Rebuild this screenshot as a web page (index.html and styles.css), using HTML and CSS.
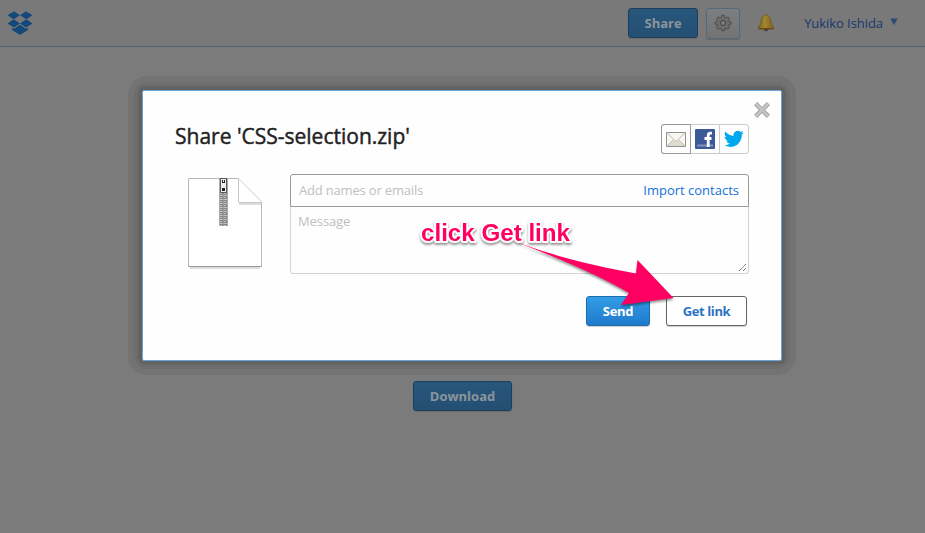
FILE: index.html
```html
<!DOCTYPE html>
<html lang="en">
<head>
<meta charset="utf-8">
<title>Dropbox - CSS-selection.zip</title>
<link rel="stylesheet" href="styles.css">
</head>
<body>
<header class="topbar">
  <svg class="logo" width="26" height="25" viewBox="0 0 26 25" fill="#15487a">
    <path d="M7 0.3L13 4.2L6.7 8.3L0.5 4.2ZM19 0.3L25.5 4.2L19.3 8.3L13 4.2ZM6.7 8.3L13 12.5L7 16.5L0.5 12.5ZM19.3 8.3L25.5 12.5L19 16.5L13 12.5ZM13 13.8L19 17.7L20.9 16.6V19L13 24L5.1 19V16.6L7 17.7Z"/>
  </svg>
  <nav class="actions">
    <button class="btn btn-dim share">Share</button>
    <button class="gear" aria-label="Settings">
      <svg width="18" height="18" viewBox="0 0 18 18">
        <path d="M7.7 1.3H10.3L10.8 3.4L12.2 4L14 2.9L15.6 4.5L14.6 6.2L15.1 7.5L17 8V10.2L15.1 10.7L14.5 12L15.5 13.7L13.8 15.3L12.1 14.3L10.8 14.9L10.3 16.8H7.8L7.3 14.9L5.9 14.3L4.2 15.4L2.6 13.7L3.6 12L3 10.7L1 10.2V8L3 7.5L3.6 6.1L2.6 4.4L4.2 2.8L5.9 3.9L7.3 3.3Z" fill="#6c6c6c" stroke="#484848" stroke-width=".9"/>
        <circle cx="9" cy="9" r="2.5" fill="#7c7c7c" stroke="#424242" stroke-width="1"/>
      </svg>
    </button>
    <svg class="bell" width="18" height="18" viewBox="0 0 18 18">
      <defs><linearGradient id="brass" x2="1"><stop stop-color="#806216"/><stop offset=".42" stop-color="#a08730"/><stop offset="1" stop-color="#80601b"/></linearGradient></defs>
      <path d="M6.5 15H11.5Q11.1 17.2 9 17.2T6.5 15Z" fill="#443b2e"/>
      <path d="M6.3 2.4Q7.3 .8 9 .8T11.7 2.4Q13.7 3.4 13.8 6.2Q13.9 10 15 11.2Q17.3 13 16.5 15H1.5Q.7 13 3 11.2Q4.1 10 4.2 6.2Q4.3 3.4 6.3 2.4Z" fill="url(#brass)" stroke="#6c501d" stroke-width=".7"/>
      <path d="M1.7 14.6H16.3" stroke="#644815"/>
    </svg>
    <a class="user">Yukiko Ishida</a>
    <svg class="caret" width="8" height="8" viewBox="0 0 8 8"><path d="M.4.5H7.6L4 7.3Z" fill="#2a4d75"/></svg>
  </nav>
</header>

<main class="page"><button class="btn btn-dim download">Download</button></main>

<section class="dialog" role="dialog">
  <svg class="close" width="18" height="18" viewBox="0 0 18 18">
    <path d="M2.6 2.6L15.4 15.4M15.4 2.6L2.6 15.4" stroke="#999" stroke-width="4.4"/>
    <path d="M2.8 2.8L15.2 15.2M15.2 2.8L2.8 15.2" stroke="#c4c4c4" stroke-width="2.9"/>
  </svg>
  <div class="heading">
    <h1>Share 'CSS-selection.zip'</h1>
    <div class="channels">
      <span class="channel mail">
        <svg width="20" height="15" viewBox="0 0 20 15"><path d="M.5.5H19.5V14.5H.5Z" fill="#f7f6f1" stroke="#929292"/><path d="M1 14L7.5 8L10 9.5L12.5 8L19 14Z" fill="#dedbcf"/><path d="M1 1L10 9.4L19 1M1 14L7.5 7.5M19 14L12.5 7.5" fill="none" stroke="#b6b3a6" stroke-width=".8"/></svg>
      </span>
      <span class="channel facebook">
        <svg width="20" height="20" viewBox="0 0 20 20"><rect width="20" height="20" rx="1" fill="#3c5a98"/><path d="M2 16.5H18" stroke="#8293be" stroke-width="2"/><path d="M17 4.2H15.5Q13.2 4.2 13.2 7V18M9.5 9.5H16.5" fill="none" stroke="#fff" stroke-width="2.8"/></svg>
      </span>
      <span class="channel">
        <svg width="20" height="18" viewBox="0 0 24 20"><path d="M23.8 2.4A10 10 0 0 1 21 3.2Q22.5 2.2 23.1.5A10 10 0 0 1 20 1.7Q18.5.1 16.4.1A4.9 4.9 0 0 0 11.6 6.1Q5.3 5.8 1.5 1Q-.5 5 3 7.5Q1.8 7.5.8 6.9Q.8 10.7 4.7 11.8Q3.6 12.1 2.5 11.9Q3.6 15.1 7.1 15.3Q4 17.7 0 17.3Q3.4 19.5 7.5 19.5C16.5 19.5 21.4 12 21.4 5.5V4.9Q22.9 3.8 23.8 2.4Z" fill="#00a9ed"/></svg>
      </span>
    </div>
  </div>
  <div class="content">
    <svg class="file" width="76" height="94" viewBox="0 0 76 94">
      <defs><pattern id="teeth" width="4" height="4" patternUnits="userSpaceOnUse"><path fill="#858585" d="M0 0H4V4H0Z"/><path fill="#c2c2c2" d="M0 0H3V1H0ZM1 2H4V3H1Z"/></pattern></defs>
      <path d="M3 91H73" stroke="#ddd" stroke-width="2"/>
      <path d="M1.5 1.5H51.5L74.5 25V89.5H1.5Z" fill="#fff" stroke="#b8b8b8"/>
      <path d="M1.5 89.5H74.5" stroke="#999"/>
      <path d="M52 27H74" stroke="#ddd" stroke-width="2"/>
      <path d="M51.5 1.5V25.5H74.5" fill="#fff" stroke="#c8c8c8"/>
      <path d="M32 1H41V49H32Z" fill="url(#teeth)"/><path d="M36.5 16V49" stroke="#999"/>
      <path d="M32.5 1V49M40.5 1V49" stroke="#aaa"/>
      <rect x="33" y="1" width="7" height="15" rx="1" fill="#555"/><path d="M34 2H39V15H34Z" fill="#eee"/><path d="M35 3H36V5H37V3H38V6H35ZM35 11H38V14H35Z" fill="#222"/>
    </svg>
    <div class="form">
      <div class="recipients"><span>Add names or emails</span><a>Import contacts</a></div>
      <div class="message"><span>Message</span>
        <svg width="9" height="9" viewBox="0 0 9 9"><path d="M1 8L8 1M5 8L8 5" stroke="#555" stroke-dasharray="1.2 .5"/></svg>
      </div>
      <div class="buttons"><button class="btn send">Send</button><button class="btn get-link">Get link</button></div>
    </div>
  </div>
</section>

<svg class="annotation" width="280" height="110" viewBox="410 210 280 110">
  <path class="arrow" d="M516 242Q570 262 636 273.5L637.5 260L673.5 298L621 305L629 293Q590 270 516 242Z"/>
  <text x="421" y="241" textLength="149" lengthAdjust="spacingAndGlyphs">click Get link</text>
</svg>
</body>
</html>
```
FILE: styles.css
```css
* { box-sizing: border-box; }
body { margin: 0; width: 925px; height: 533px; overflow: hidden; background: #7b7b7b; font-family: "Open Sans", sans-serif; font-size: 13px; }
button { font: inherit; }
.topbar { height: 47px; padding: 0 27px 0 7px; display: flex; justify-content: space-between; align-items: center; border-bottom: 1px solid #52647b; background: #797979; }
.logo { margin-top: 1px; }
.actions { display: flex; align-items: center; }
.btn { height: 30px; padding: 0; border-radius: 3px; font-weight: 700; line-height: 28px; text-align: center; }
.btn-dim { color: #8b959b; background: linear-gradient(#27577b, #244f73); border: 1px solid #1d3e5b; box-shadow: 0 1px 1px #6a6a6a; }
.share { width: 70px; }
.gear { width: 34px; height: 31px; margin-left: 8px; padding: 0; display: flex; align-items: center; justify-content: center; background: linear-gradient(#7d7f80, #737373); border: 1px solid #526b7c; border-radius: 3px; box-shadow: 0 1px 1px #666; }
.bell { margin-left: 17px; margin-top: -1px; }
.user { margin-left: 29px; color: #17386c; line-height: 18px; letter-spacing: -.06px; }
.caret { margin: -2px 0 0 7px; }
.page { padding-top: 334px; display: flex; justify-content: center; }
.download { width: 99px; }
.dialog { position: absolute; left: 142px; top: 90px; width: 640px; height: 271px; padding: 33px 32px 0; background: #fefefe; border: 1px solid #68a4d8; border-radius: 2px; }
.dialog::before { content: ""; position: absolute; z-index: -1; inset: -6px; border-radius: 10px; background: #686868; box-shadow: 0 0 0 3px #6e6e6e, 0 0 0 9px #737373; }
.dialog::after { content: ""; position: absolute; z-index: -1; inset: -4px; border-radius: 5px; background: #626262; }
.close { position: absolute; right: 10px; top: 10px; }
.heading { display: flex; justify-content: space-between; align-items: flex-start; height: 50px; }
h1 { margin: -2px 0 0; font-size: 21px; line-height: 28px; font-weight: 400; -webkit-text-stroke: .45px #222; color: #222; white-space: nowrap; }
.channels { display: flex; width: 88px; height: 30px; border: 1px solid #ccc; border-radius: 3px; }
.channel { width: 29px; display: flex; align-items: center; justify-content: center; border-left: 1px solid #ccc; }
.mail { width: 30px; flex: none; margin: -1px 0 -1px -1px; border: 1px solid #999; border-radius: 3px 0 0 3px; }
.facebook { width: 28px; flex: none; border-left: 0; }
.content { display: flex; }
.file { margin: 3px 27px 0 12px; }
.form { width: 459px; }
.recipients { display: flex; align-items: center; justify-content: space-between; height: 33px; padding: 0 8px 2px; border: 1px solid #999; border-radius: 3px 3px 0 0; color: #bfbfbf; letter-spacing: -.18px; }
.recipients a { color: #1471d8; margin-right: 1px; letter-spacing: 0; }
.message { height: 67px; display: flex; justify-content: space-between; padding: 5px 1px 1px 7px; border: 1px solid #d3d3d3; border-top: 0; border-radius: 0 0 3px 3px; color: #bfbfbf; letter-spacing: -.1px; }
.message svg { align-self: flex-end; }
.buttons { display: flex; justify-content: flex-end; gap: 16px; padding: 22px 2px 0 0; }
.send { width: 64px; color: #fff; background: linear-gradient(#339de8, #1f7acb); border: 1px solid #1d6dad; box-shadow: 0 1px 1px #ccc; letter-spacing: -.3px; }
.get-link { width: 81px; color: #2d73c5; background: #fff; border: 1px solid #666; box-shadow: 0 1px 1px #ccc; letter-spacing: -.4px; }
.annotation { position: absolute; left: 410px; top: 210px; }
.arrow { fill: #ff0062; filter: drop-shadow(0 2px 1px rgba(0, 0, 0, .4)); }
.annotation text { font: bold 24px "Liberation Sans", sans-serif; fill: #ff0062; stroke: #fff; stroke-width: 4px; stroke-linejoin: round; paint-order: stroke; filter: drop-shadow(0 2px 1px rgba(0, 0, 0, .4)); }
```
